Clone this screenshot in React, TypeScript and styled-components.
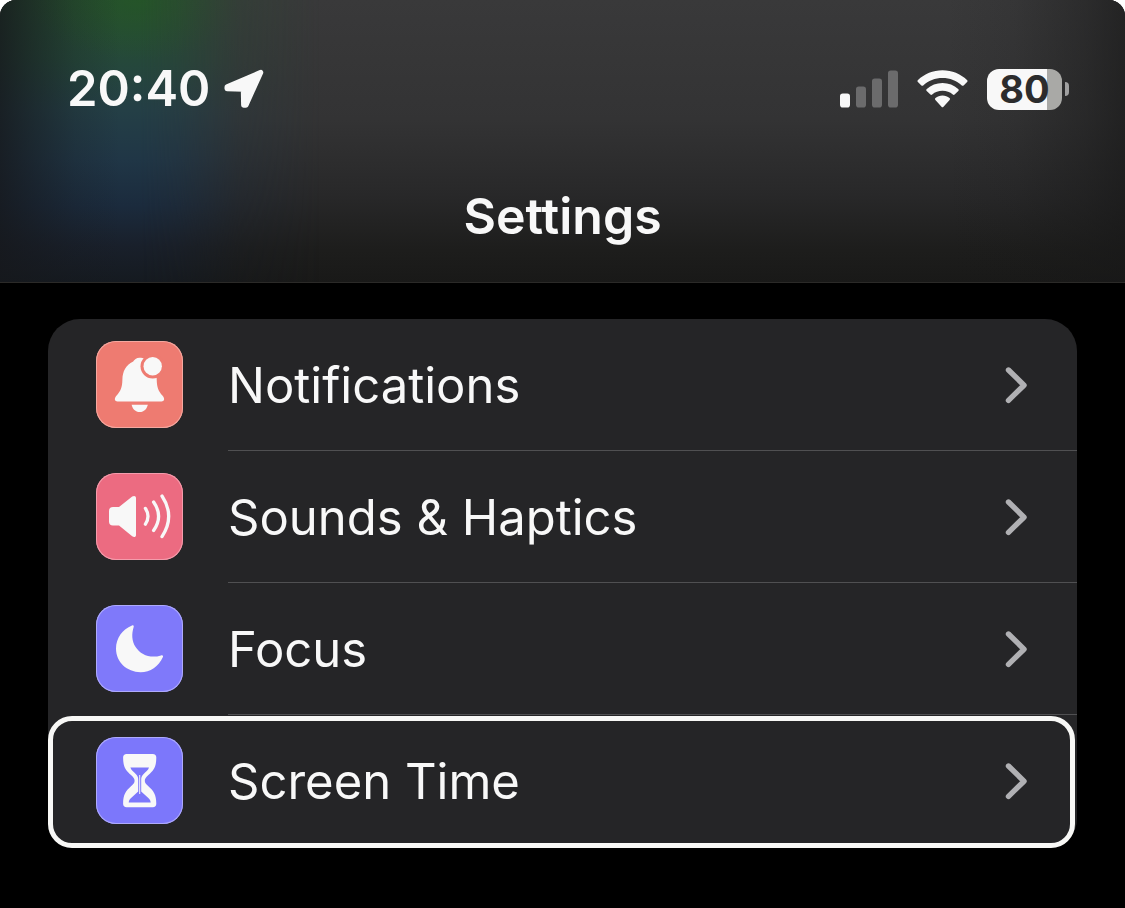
import React from 'react';
import styled, { createGlobalStyle, css } from 'styled-components';

const GlobalStyle = createGlobalStyle`
  *, *::before, *::after { box-sizing: border-box; }
  html { background: #fff; }
  body { margin: 0; font-family: Inter, "Liberation Sans", sans-serif; }
`;

const Screen = styled.div`
  min-height: 100vh;
  background: #000;
  color: #f8f8f8;
  border-radius: 16px 16px 0 0;
  overflow: hidden;
`;

const Header = styled.header`
  position: relative;
  isolation: isolate;
  border-bottom: 1px solid #2b2a28;
  background:
    linear-gradient(270deg, rgba(24, 24, 24, 0.65) 0, rgba(24, 24, 24, 0.4) 40px, rgba(24, 24, 24, 0.1) 110px, rgba(24, 24, 24, 0) 180px),
    linear-gradient(180deg, #39393a 0, #333334 120px, #282829 195px, #1d1d1c 250px, #191918 100%);

  &::before {
    content: '';
    position: absolute;
    z-index: -1;
    inset: 0 auto 0 0;
    width: 320px;
    background:
      linear-gradient(90deg, rgba(22, 24, 28, 0.8) 0, rgba(22, 24, 28, 0.55) 30px, rgba(22, 24, 28, 0.2) 75px, rgba(22, 24, 28, 0) 120px),
      radial-gradient(110px 60px at 140px 0, rgba(36, 86, 38, 0.8), rgba(36, 86, 38, 0) 100%),
      linear-gradient(180deg, #274d32 0, #25483a 60px, #243f46 110px, #203646 160px, #1b2b3d 205px, #19202b 245px, #151a20 100%);
    mask-image: linear-gradient(90deg, #000 0, #000 140px, rgba(0, 0, 0, 0.8) 180px, rgba(0, 0, 0, 0.25) 240px, transparent 320px);
  }
`;

const StatusBar = styled.div`
  display: flex;
  align-items: center;
  justify-content: space-between;
  padding: 59px 56px 0 67px;
`;

const StatusGroup = styled.div<{ $gap: number }>`
  display: flex;
  align-items: center;
  gap: ${({ $gap }) => $gap}px;
  svg { display: block; }
`;

const Clock = styled.time`
  font-size: 49px;
  line-height: 60px;
  font-weight: 600;
`;

const Battery = styled.div`
  display: flex;
  align-items: center;
  gap: 3px;
`;

const BatteryBody = styled.div`
  width: 75px;
  height: 41px;
  border-radius: 12px;
  background: linear-gradient(90deg, #f8f8f8 80%, #a9a9a6 80%);
  color: #2c2c2d;
  font-size: 38px;
  line-height: 41px;
  font-weight: 700;
  text-align: center;
`;

const BatteryTip = styled.div`
  width: 4px;
  height: 14px;
  border-radius: 0 4px 4px 0;
  background: #a0a0a0;
`;

const Title = styled.h1`
  margin: 0;
  padding: 67px 0 36px;
  font-size: 50px;
  line-height: 60px;
  font-weight: 600;
  text-align: center;
`;

const List = styled.ul`
  list-style: none;
  margin: 36px 48px 60px;
  padding: 0;
  background: #252527;
  border-radius: 32px 32px 28px 28px;
`;

const RowLink = styled.a<{ $focused?: boolean }>`
  position: relative;
  display: flex;
  align-items: center;
  gap: 45px;
  height: 132px;
  padding-left: 48px;
  color: inherit;
  text-decoration: none;
  outline: none;

  ${({ $focused }) =>
    $focused &&
    css`
      &::after {
        content: '';
        position: absolute;
        inset: 1px 2px -1px 0;
        border: 5px solid #f8f8f6;
        border-radius: 24px;
      }
    `}
`;

const IconTile = styled.span<{ $color: string; $edge: string }>`
  flex: none;
  width: 87px;
  height: 87px;
  margin-bottom: 1px;
  border-radius: 20px;
  background: ${({ $color }) => $color};
  box-shadow: inset 0 0 0 1px ${({ $edge }) => $edge};
  svg { display: block; }
`;

const RowBody = styled.span<{ $divided: boolean }>`
  flex: 1;
  display: flex;
  align-items: center;
  justify-content: space-between;
  height: 100%;
  padding-right: 49px;
  border-bottom: 1px solid ${({ $divided }) => ($divided ? '#505052' : 'transparent')};
`;

const Label = styled.span`
  padding-top: 3px;
  font-size: 49px;
  line-height: 60px;
  font-weight: 400;
`;

const Chevron = () => (
  <svg width="24" height="40" viewBox="0 0 24 40" fill="none" stroke="#b0b0b3" strokeWidth="5.4" strokeLinecap="round" strokeLinejoin="round" aria-hidden="true">
    <path d="M4.5 5 L20 20.2 L4.5 35.4" />
  </svg>
);

const Glyph = ({ children }: { children: React.ReactNode }) => (
  <svg width="87" height="87" viewBox="0 0 87 87" fill="#f8f8f8" aria-hidden="true">
    {children}
  </svg>
);

const BellGlyph = ({ tile }: { tile: string }) => (
  <Glyph>
    <path d="M43.5 16.7 C40.5 16.7 38.2 18.8 37.2 20.6 C29.5 24 26.6 31 26.4 38.5 C26.2 47 24.5 50 20.6 54.6 C17.5 58.4 19 60.4 21.5 60.4 H65.5 C68 60.4 69.5 58.4 66.4 54.6 C62.5 50 60.9 47 60.7 38.5 L60.4 30 L49 18 C47.5 17 45.5 16.7 43.5 16.7 Z" />
    <circle cx="56.7" cy="25.3" r="12.2" fill={tile} />
    <circle cx="56.7" cy="25.3" r="9.2" />
    <path d="M35.6 63.7 H51.8 C50.8 68 48 71 43.7 71 C39.4 71 36.6 68 35.6 63.7 Z" />
  </Glyph>
);

const SpeakerGlyph = () => (
  <Glyph>
    <path d="M17 34 H23 L36.2 23.6 C38 22.3 40 22.8 40 25 V62 C40 64.2 38 64.7 36.2 63.3 L23 52.6 H17 C14.4 52.6 13 51.2 13 48.6 V38 C13 35.4 14.4 34 17 34 Z" />
    <g fill="none" stroke="#f8f8f8" strokeWidth="3.3" strokeLinecap="round">
      <path d="M49.4 35.4 Q54.6 43.2 49.4 51.2" />
      <path d="M57.6 29 Q67.6 43.2 57.6 57.5" />
      <path d="M66 23 Q79.4 43.2 66 63.6" />
    </g>
  </Glyph>
);

const MoonGlyph = () => (
  <Glyph>
    <path d="M36 20.4 C37.4 19.8 38.2 20.7 37.6 22.2 C35.6 28.5 35.6 36 39.6 42 C44.6 49.8 54.5 53.8 65 50.4 C66.6 49.8 67.5 50.8 66.8 52.2 C62.6 61.5 54.3 67.2 44.6 67.2 C31 67.2 20 57.2 20 43.6 C20 33 26.4 24.2 36 20.4 Z" />
  </Glyph>
);

const HourglassGlyph = ({ tile }: { tile: string }) => (
  <Glyph>
    <path d="M30.6 17 H56.8 C59 17 60.3 18.4 60.3 20.6 C60.3 30.5 57.4 33.5 52.4 38 C50 40.3 48.8 41.6 48.8 43.7 C48.8 45.8 50 47.1 52.4 49.3 C57.4 53.8 60.3 57.5 60.3 66.8 C60.3 69 59 70.3 56.8 70.3 H30.6 C28.4 70.3 27.1 69 27.1 66.8 C27.1 57.5 30 53.8 35 49.3 C37.4 47.1 38.6 45.8 38.6 43.7 C38.6 41.6 37.4 40.3 35 38 C30 33.5 27.1 30.5 27.1 20.6 C27.1 18.4 28.4 17 30.6 17 Z" />
    <path fill={tile} d="M34.4 30.6 H53 C52.2 33.4 49.6 35 47.4 37.2 C45.8 38.9 45.2 40.4 45.2 42.5 V54.5 L52.6 61.2 C54 62.6 54.6 64 54.7 65.5 H32.7 C32.8 64 33.4 62.6 34.8 61.2 L42.2 54.5 V42.5 C42.2 40.4 41.6 38.9 40 37.2 C37.8 35 35.2 33.4 34.4 30.6 Z" />
    <path d="M43.2 38 H44.2 V57 H43.2 Z" />
  </Glyph>
);

const LocationArrow = () => (
  <svg width="40" height="40" viewBox="0 0 40 40" fill="#f8f8f8" stroke="#f8f8f8" strokeWidth="5" strokeLinejoin="round" role="img" aria-label="Location in use">
    <path d="M36.8 3.4 L22 36.2 L19.6 36.2 L19.3 20.2 L3 19.8 L3 17.9 Z" />
  </svg>
);

const SignalBars = () => (
  <svg width="58" height="38" viewBox="0 0 58 38" fill="#6b6b6c" role="img" aria-label="Signal strength">
    <rect x="0" y="23.5" width="10" height="14" rx="2.8" fill="#f8f8f8" />
    <rect x="16" y="16.5" width="10" height="21" rx="2.8" />
    <rect x="32" y="8.5" width="10" height="29" rx="2.8" />
    <rect x="48" y="0.5" width="10" height="37" rx="2.8" />
  </svg>
);

const Wifi = () => (
  <svg width="51" height="38" viewBox="0 0 51 38" fill="#f8f8f8" role="img" aria-label="Wi-Fi">
    <path d="M25.5 0.3 C35 0.3 43.6 4 50 10 C50.7 10.7 50.7 11.3 50.1 11.9 L46.6 15.4 C46 16 45.4 16 44.8 15.4 C39.7 10.7 32.9 8.1 25.5 8.1 C18.1 8.1 11.3 10.7 6.2 15.4 C5.6 16 5 16 4.4 15.4 L0.9 11.9 C0.3 11.3 0.3 10.7 1 10 C7.4 4 16 0.3 25.5 0.3 Z" />
    <path d="M25.5 13 C31.5 13 37 15.2 41.2 19 C41.9 19.7 41.9 20.3 41.3 20.9 L37.6 24.5 C37 25.1 36.4 25 35.8 24.5 C33 22.1 29.4 20.8 25.5 20.8 C21.6 20.8 18 22.1 15.2 24.5 C14.6 25 14 25.1 13.4 24.5 L9.7 20.9 C9.1 20.3 9.1 19.7 9.8 19 C14 15.2 19.5 13 25.5 13 Z" />
    <path d="M25.5 25.6 C28.2 25.6 30.6 26.5 32.5 28.1 C33.2 28.7 33.2 29.3 32.6 29.9 L26.5 36.7 C25.8 37.5 25.2 37.5 24.5 36.7 L18.4 29.9 C17.8 29.3 17.8 28.7 18.5 28.1 C20.4 26.5 22.8 25.6 25.5 25.6 Z" />
  </svg>
);

const items = [
  { id: 'notifications', label: 'Notifications', color: '#ee7b71', edge: '#f4a8a0', Icon: BellGlyph },
  { id: 'sounds', label: 'Sounds & Haptics', color: '#ec6b81', edge: '#f49cac', Icon: SpeakerGlyph },
  { id: 'focus', label: 'Focus', color: '#7f79fa', edge: '#aeaafc', Icon: MoonGlyph },
  { id: 'screen-time', label: 'Screen Time', color: '#7c77fb', edge: '#aeaafc', Icon: HourglassGlyph, focused: true },
];

export default function App() {
  return (
    <>
      <GlobalStyle />
      <Screen>
        <Header>
          <StatusBar>
            <StatusGroup $gap={14}>
              <Clock>20:40</Clock>
              <LocationArrow />
            </StatusGroup>
            <StatusGroup $gap={19}>
              <SignalBars />
              <Wifi />
              <Battery>
                <BatteryBody>80</BatteryBody>
                <BatteryTip />
              </Battery>
            </StatusGroup>
          </StatusBar>
          <Title>Settings</Title>
        </Header>
        <main>
          <List>
            {items.map(({ id, label, color, edge, Icon, focused }, index) => (
              <li key={id}>
                <RowLink href={`#${id}`} $focused={focused}>
                  <IconTile $color={color} $edge={edge}>
                    <Icon tile={color} />
                  </IconTile>
                  <RowBody $divided={index < items.length - 1}>
                    <Label>{label}</Label>
                    <Chevron />
                  </RowBody>
                </RowLink>
              </li>
            ))}
          </List>
        </main>
      </Screen>
    </>
  );
}
